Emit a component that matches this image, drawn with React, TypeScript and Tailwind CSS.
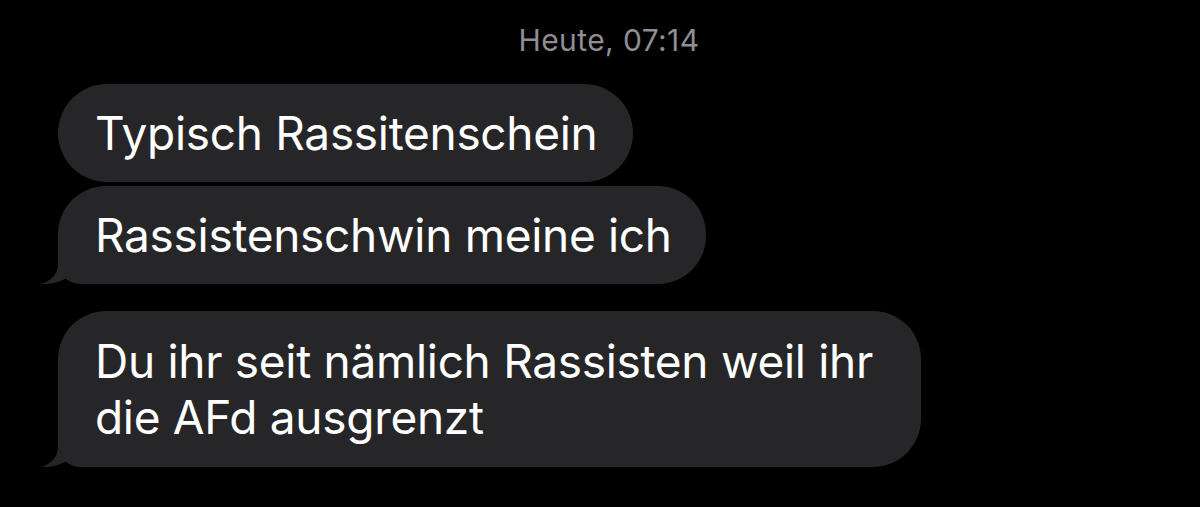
import React from "react";

const font = { fontFamily: "Inter, 'Noto Sans', sans-serif" };

function Tail() {
  return (
    <svg
      className="absolute left-[-20px] bottom-0"
      width="60"
      height="50"
      viewBox="0 0 60 50"
    >
      <path
        d="M20,0 L20,30 C20,40 13,47 3,50 C 16,51 28,46 37,38 L37,0 Z"
        fill="#262628"
      />
    </svg>
  );
}

function Bubble({
  children,
  tail,
  extra = "",
}: {
  children: React.ReactNode;
  tail?: boolean;
  extra?: string;
}) {
  return (
    <div
      className={
        "relative self-start bg-[#262628] text-white text-[46px] leading-[56px] pl-[37px] tracking-[-0.3px] " +
        (tail ? "rounded-[48px] rounded-bl-[22px] " : "rounded-[49px] ") +
        extra
      }
    >
      {tail && <Tail />}
      <span className="relative">{children}</span>
    </div>
  );
}

export default function App() {
  return (
    <div className="w-[1200px] h-[507px] bg-black overflow-hidden" style={font}>
      <div className="flex justify-center pt-[22px] pl-[18px]">
        <span className="text-[#8e8e93] text-[30px] leading-[36px] tracking-[0.4px]">Heute, 07:14</span>
      </div>
      <div className="flex flex-col pl-[58px] pt-[26px]">
        <Bubble extra="pr-[36px] py-[21px]">Typisch Rassitenschein</Bubble>
        <div className="h-[4px]" />
        <Bubble tail extra="pr-[34px] py-[21px]">Rassistenschwin meine ich</Bubble>
        <div className="h-[27px]" />
        <Bubble tail extra="pr-[48px] py-[22px]">
          Du ihr seit nämlich Rassisten weil ihr
          <br />
          die AFd ausgrenzt
        </Bubble>
      </div>
    </div>
  );
}
